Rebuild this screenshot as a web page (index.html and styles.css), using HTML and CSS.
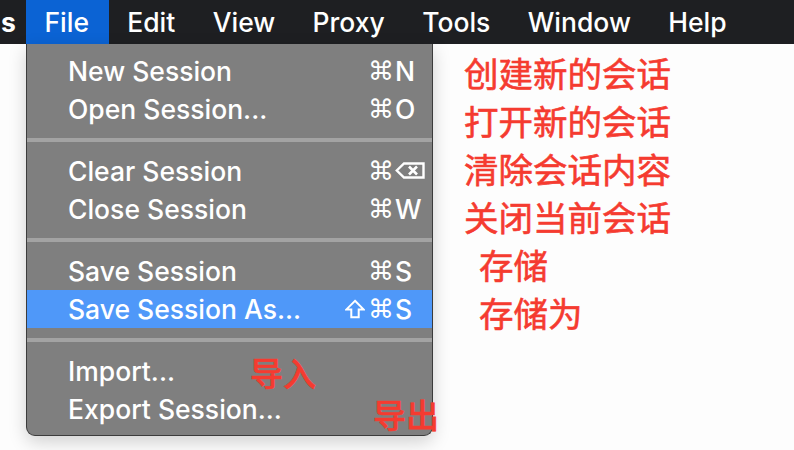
FILE: index.html
```html
<!DOCTYPE html>
<html lang="zh-CN">
<head>
<meta charset="utf-8">
<title>File menu</title>
<link rel="stylesheet" href="styles.css">
</head>
<body>
<header class="menubar">
  <span class="app">s</span>
  <span class="mb-item active">File</span>
  <span class="mb-item">Edit</span>
  <span class="mb-item">View</span>
  <span class="mb-item">Proxy</span>
  <span class="mb-item">Tools</span>
  <span class="mb-item">Window</span>
  <span class="mb-item">Help</span>
</header>
<main class="stage">
  <div class="gutter"></div>
  <div class="menu">
    <div class="group">
      <div class="row"><span class="label">New Session</span><span class="mods">⌘</span><span class="key">N</span></div>
      <div class="row"><span class="label">Open Session...</span><span class="mods">⌘</span><span class="key">O</span></div>
    </div>
    <div class="sep"></div>
    <div class="group">
      <div class="row"><span class="label">Clear Session</span><span class="mods">⌘</span><span class="key"><svg class="del" width="30" height="17" viewBox="0 0 30 17"><path d="M9 1.5 H28.5 V15.5 H9 L1.8 8.5 Z" fill="none" stroke="#fff" stroke-width="2.4" stroke-linejoin="miter"/><path d="M14 4.5 L22 12.5 M22 4.5 L14 12.5" stroke="#fff" stroke-width="2.6"/></svg></span></div>
      <div class="row"><span class="label">Close Session</span><span class="mods">⌘</span><span class="key">W</span></div>
    </div>
    <div class="sep"></div>
    <div class="group">
      <div class="row"><span class="label">Save Session</span><span class="mods">⌘</span><span class="key">S</span></div>
      <div class="row selected"><span class="label">Save Session As...</span><span class="mods"><svg class="shift" width="20" height="20" viewBox="0 0 20 20"><path d="M10 1.8 L18.6 10.4 H13.7 V18.2 H6.3 V10.4 H1.4 Z" fill="none" stroke="#fff" stroke-width="2" stroke-linejoin="miter"/></svg>⌘</span><span class="key">S</span></div>
    </div>
    <div class="sep"></div>
    <div class="group">
      <div class="row"><span class="label">Import...</span></div>
      <div class="row"><span class="label">Export Session...</span></div>
    </div>
    <span class="note note-import">导入</span>
    <span class="note note-export">导出</span>
  </div>
  <ul class="notes">
    <li>创建新的会话</li>
    <li>打开新的会话</li>
    <li>清除会话内容</li>
    <li>关闭当前会话</li>
    <li class="indent">存储</li>
    <li class="indent">存储为</li>
  </ul>
</main>
</body>
</html>
```
FILE: styles.css
```css
* { box-sizing: border-box; }
html, body { margin: 0; padding: 0; }
body {
  width: 794px;
  height: 450px;
  overflow: hidden;
  background: #fdfdfd;
  font-family: Inter, "Liberation Sans", sans-serif;
  color: #fff;
}
.menubar {
  height: 44px;
  background: #1e1f22;
  display: flex;
  align-items: center;
  font-size: 26.5px;
  font-weight: 500;
  line-height: 44px;
  white-space: nowrap;
}
.app {
  width: 26px;
  padding-left: 1px;
  font-weight: 700;
  flex: 0 0 26px;
}
.mb-item {
  padding: 0 18.7px;
  height: 44px;
}
.mb-item.active { background: #0b63d4; padding: 0 19.5px 0 18.5px; }

.stage {
  display: flex;
  align-items: flex-start;
}
.gutter { width: 26px; flex: 0 0 26px; height: 44px; }
.menu {
  position: relative;
  width: 407px;
  flex: 0 0 407px;
  height: 392px;
  background: #7f7f7f;
  border: 1px solid #3c3c3c;
  border-top: none;
  border-radius: 0 0 9px 9px;
  padding: 8px 0 7px;
  box-shadow: 0 6px 18px rgba(0,0,0,0.18);
  font-size: 26.5px;
  font-weight: 500;
}
.sep {
  height: 4px;
  margin: 10px 0;
  background: #a3a3a3;
}
.row {
  height: 38px;
  display: flex;
  align-items: center;
  padding-left: 41px;
  padding-bottom: 1px;
  white-space: nowrap;
}
.row.selected { background: #4f98f9; }
.label { flex: 1 1 auto; }
.mods {
  display: flex;
  align-items: center;
  justify-content: flex-end;
  font-family: "DejaVu Sans", sans-serif;
  font-size: 26px;
  font-weight: 400;
}
.shift { margin-right: 3px; }
.key {
  width: 37px;
  margin-left: 1px;
  display: flex;
  align-items: center;
}

.note {
  color: #f53b30;
  font-family: "Noto Sans CJK SC", sans-serif;
  font-size: 33px;
  -webkit-text-stroke: 0.6px #f53b30;
  line-height: 1;
  position: absolute;
  white-space: nowrap;
}
.note-import { left: 223px; top: 312px; }
.note-export { left: 346px; top: 354px; }

.notes {
  list-style: none;
  margin: 4px 0 0 31px;
  padding: 0;
  color: #f53b30;
  font-family: "Noto Sans CJK SC", sans-serif;
  font-size: 34.5px;
  -webkit-text-stroke: 0.6px #f53b30;
  line-height: 48px;
}
.notes .indent { padding-left: 15px; }
```
